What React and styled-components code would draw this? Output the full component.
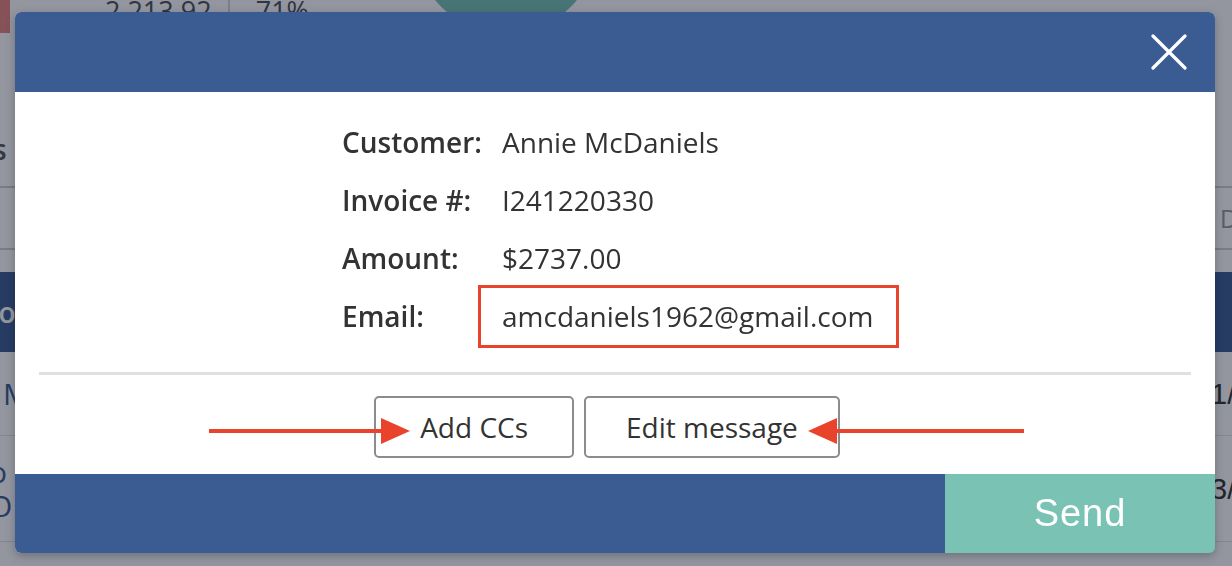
import styled, { createGlobalStyle } from "styled-components";

const GlobalStyle = createGlobalStyle`
  html, body {
    margin: 0;
    padding: 0;
  }
  body {
    font-family: "Open Sans", "Liberation Sans", sans-serif;
    background: #fff;
    width: 1232px;
    height: 566px;
    overflow: hidden;
  }
`;

const BLUE = "#3b5b93";
const TEAL = "#79c2b4";
const RED = "#e9442b";

function CloseIcon() {
  return (
    <svg width="36" height="36" viewBox="0 0 36 36">
      <path d="M2 2 L34 34 M34 2 L2 34" stroke="#fff" strokeWidth="3.2" strokeLinecap="round" />
    </svg>
  );
}

// annotation arrows drawn over the dialog
function Arrow({ dir }) {
  if (dir === "right") {
    return (
      <svg width="202" height="28" viewBox="0 0 202 28">
        <rect x="0" y="12" width="180" height="4" fill={RED} />
        <polygon points="172,1 201,14 172,27" fill={RED} />
      </svg>
    );
  }
  return (
    <svg width="217" height="28" viewBox="0 0 217 28">
      <rect x="22" y="12" width="195" height="4" fill={RED} />
      <polygon points="30,1 1,14 30,27" fill={RED} />
    </svg>
  );
}

function App() {
  return (
    <>
      <GlobalStyle />
      <Page>
        <Stats>
          <RedTab />
          <Stat $first>2,213.92</Stat>
          <StatDivider />
          <Stat>71%</Stat>
          <Chart width="200" height="40" viewBox="0 0 200 40">
            <circle cx="100" cy="-57" r="91" fill={TEAL} />
          </Chart>
        </Stats>
        <TitleSection>
          <Title>Open Invoices</Title>
        </TitleSection>
        <FilterRow>
          <FilterLabel>Date</FilterLabel>
        </FilterRow>
        <TableHead>
          <HeadCell>Description</HeadCell>
        </TableHead>
        <TableRow $h={83}>
          <Cell $shift={3}>Mark</Cell>
          <Cell $right>1/12/2024</Cell>
        </TableRow>
        <TableRow $h={105}>
          <Cell $shift={-30}>Co<br />CO</Cell>
          <Cell $right>3/02/2024</Cell>
        </TableRow>
        <LastRow>
          <SmallCell>Photos</SmallCell>
        </LastRow>

        <Overlay>
          <Modal>
            <Header>
              <CloseButton aria-label="Close">
                <CloseIcon />
              </CloseButton>
            </Header>
            <Body>
              <InfoGrid>
                <Label>Customer:</Label>
                <Value>Annie McDaniels</Value>
                <Label>Invoice #:</Label>
                <Value>I241220330</Value>
                <Label>Amount:</Label>
                <Value>$2737.00</Value>
                <Label>Email:</Label>
                <Value><Highlight>amcdaniels1962@gmail.com</Highlight></Value>
              </InfoGrid>
              <Divider />
              <ButtonRow>
                <ArrowSlot $left={194}>
                  <Arrow dir="right" />
                </ArrowSlot>
                <OutlineButton $pad={44}>Add CCs</OutlineButton>
                <OutlineButton $pad={40}>Edit message</OutlineButton>
                <ArrowSlot $left={792}>
                  <Arrow dir="left" />
                </ArrowSlot>
              </ButtonRow>
            </Body>
            <Footer>
              <SendButton>Send</SendButton>
            </Footer>
          </Modal>
        </Overlay>
      </Page>
    </>
  );
}

const Page = styled.div`
  position: relative;
  width: 1232px;
  height: 566px;
  overflow: hidden;
  background: #fff;
  color: #4a4a4a;
`;

const Stats = styled.div`
  display: flex;
  align-items: flex-start;
  height: 33px;
`;

const RedTab = styled.div`
  width: 10px;
  height: 33px;
  background: #e8837f;
`;

const Stat = styled.div`
  margin-top: -8px;
  margin-left: ${(p) => (p.$first ? "95px" : "26px")};
  margin-right: 16px;
  font-size: 27px;
  line-height: 38px;
  color: #4d4f57;
`;

const StatDivider = styled.div`
  width: 2px;
  height: 33px;
  background: #d5d5d5;
`;

const Chart = styled.svg`
  margin-left: 81px;
`;

const TitleSection = styled.div`
  height: 153px;
  border-bottom: 2px solid #cfcfcf;
  display: flex;
  align-items: flex-end;
`;

const Title = styled.div`
  margin-left: -184px;
  margin-bottom: 18px;
  font-size: 28px;
  font-weight: 600;
  color: #555;
`;

const FilterRow = styled.div`
  height: 60px;
  border-bottom: 2px solid #cfcfcf;
  margin-bottom: 22px;
  display: flex;
  justify-content: flex-end;
  align-items: center;
`;

const FilterLabel = styled.div`
  margin-right: -45px;
  font-size: 26px;
  color: #999;
`;

const TableHead = styled.div`
  height: 80px;
  background: ${BLUE};
  display: flex;
  align-items: center;
`;

const HeadCell = styled.div`
  margin-left: -122px;
  font-size: 28px;
  font-weight: 600;
  color: #fff;
`;

const TableRow = styled.div`
  height: ${(p) => p.$h}px;
  border-bottom: 1px solid #e2e2e2;
  display: flex;
  justify-content: space-between;
  align-items: center;
`;

const Cell = styled.div`
  font-size: 30px;
  line-height: 34px;
  color: ${(p) => (p.$right ? "#333" : BLUE)};
  ${(p) =>
    p.$right
      ? "margin-right: -112px; font-family: 'Liberation Sans', sans-serif;"
      : `margin-left: ${p.$shift}px;`}
`;

const LastRow = styled.div`
  padding-top: 16px;
`;

const SmallCell = styled.div`
  font-size: 22px;
  color: #333;
`;

const Overlay = styled.div`
  position: fixed;
  inset: 0;
  background: rgba(15, 22, 42, 0.45);
  display: flex;
  padding: 12px 17px 13px 15px;
`;

const Modal = styled.div`
  flex: 1;
  display: flex;
  flex-direction: column;
  background: #fff;
  border-radius: 6px;
  overflow: hidden;
  box-shadow: 0 3px 10px rgba(0, 0, 0, 0.25);
`;

const Header = styled.div`
  height: 80px;
  background: ${BLUE};
  display: flex;
  justify-content: flex-end;
  align-items: center;
  padding-right: 28px;
`;

const CloseButton = styled.button`
  border: none;
  background: none;
  padding: 0;
  display: flex;
  cursor: pointer;
`;

const Body = styled.div`
  flex: 1;
  padding: 21px 0 16px;
  color: #333;
`;

const InfoGrid = styled.div`
  display: grid;
  grid-template-columns: 160px auto;
  margin-left: 327px;
  font-size: 28px;
  line-height: 58px;
`;

const Label = styled.div`
  font-weight: 600;
`;

const Value = styled.div`
  font-weight: 400;
`;

const Highlight = styled.span`
  position: relative;
  &::after {
    content: "";
    position: absolute;
    left: -24px;
    right: -26px;
    top: -12px;
    bottom: -13px;
    border: 3px solid ${RED};
  }
`;

const Divider = styled.div`
  height: 3px;
  background: #e0e0e0;
  margin: 27px 24px 21px;
`;

const ButtonRow = styled.div`
  position: relative;
  display: flex;
  justify-content: center;
  gap: 10px;
  padding-right: 16px;
`;

const ArrowSlot = styled.div`
  position: absolute;
  left: ${(p) => p.$left}px;
  top: 21px;
  display: flex;
  z-index: 1;
`;

const OutlineButton = styled.button`
  height: 62px;
  padding: 0 ${(p) => p.$pad}px;
  border: 2px solid #8c8c8c;
  border-radius: 5px;
  background: #fff;
  font-family: "Open Sans", sans-serif;
  font-size: 28px;
  color: #333;
`;

const Footer = styled.div`
  height: 79px;
  background: ${BLUE};
  display: flex;
  justify-content: flex-end;
`;

const SendButton = styled.button`
  width: 270px;
  border: none;
  background: ${TEAL};
  color: #fff;
  font-family: "Liberation Sans", Arial, sans-serif;
  font-size: 38px;
  letter-spacing: 1px;
  padding: 0;
`;

export default App;
